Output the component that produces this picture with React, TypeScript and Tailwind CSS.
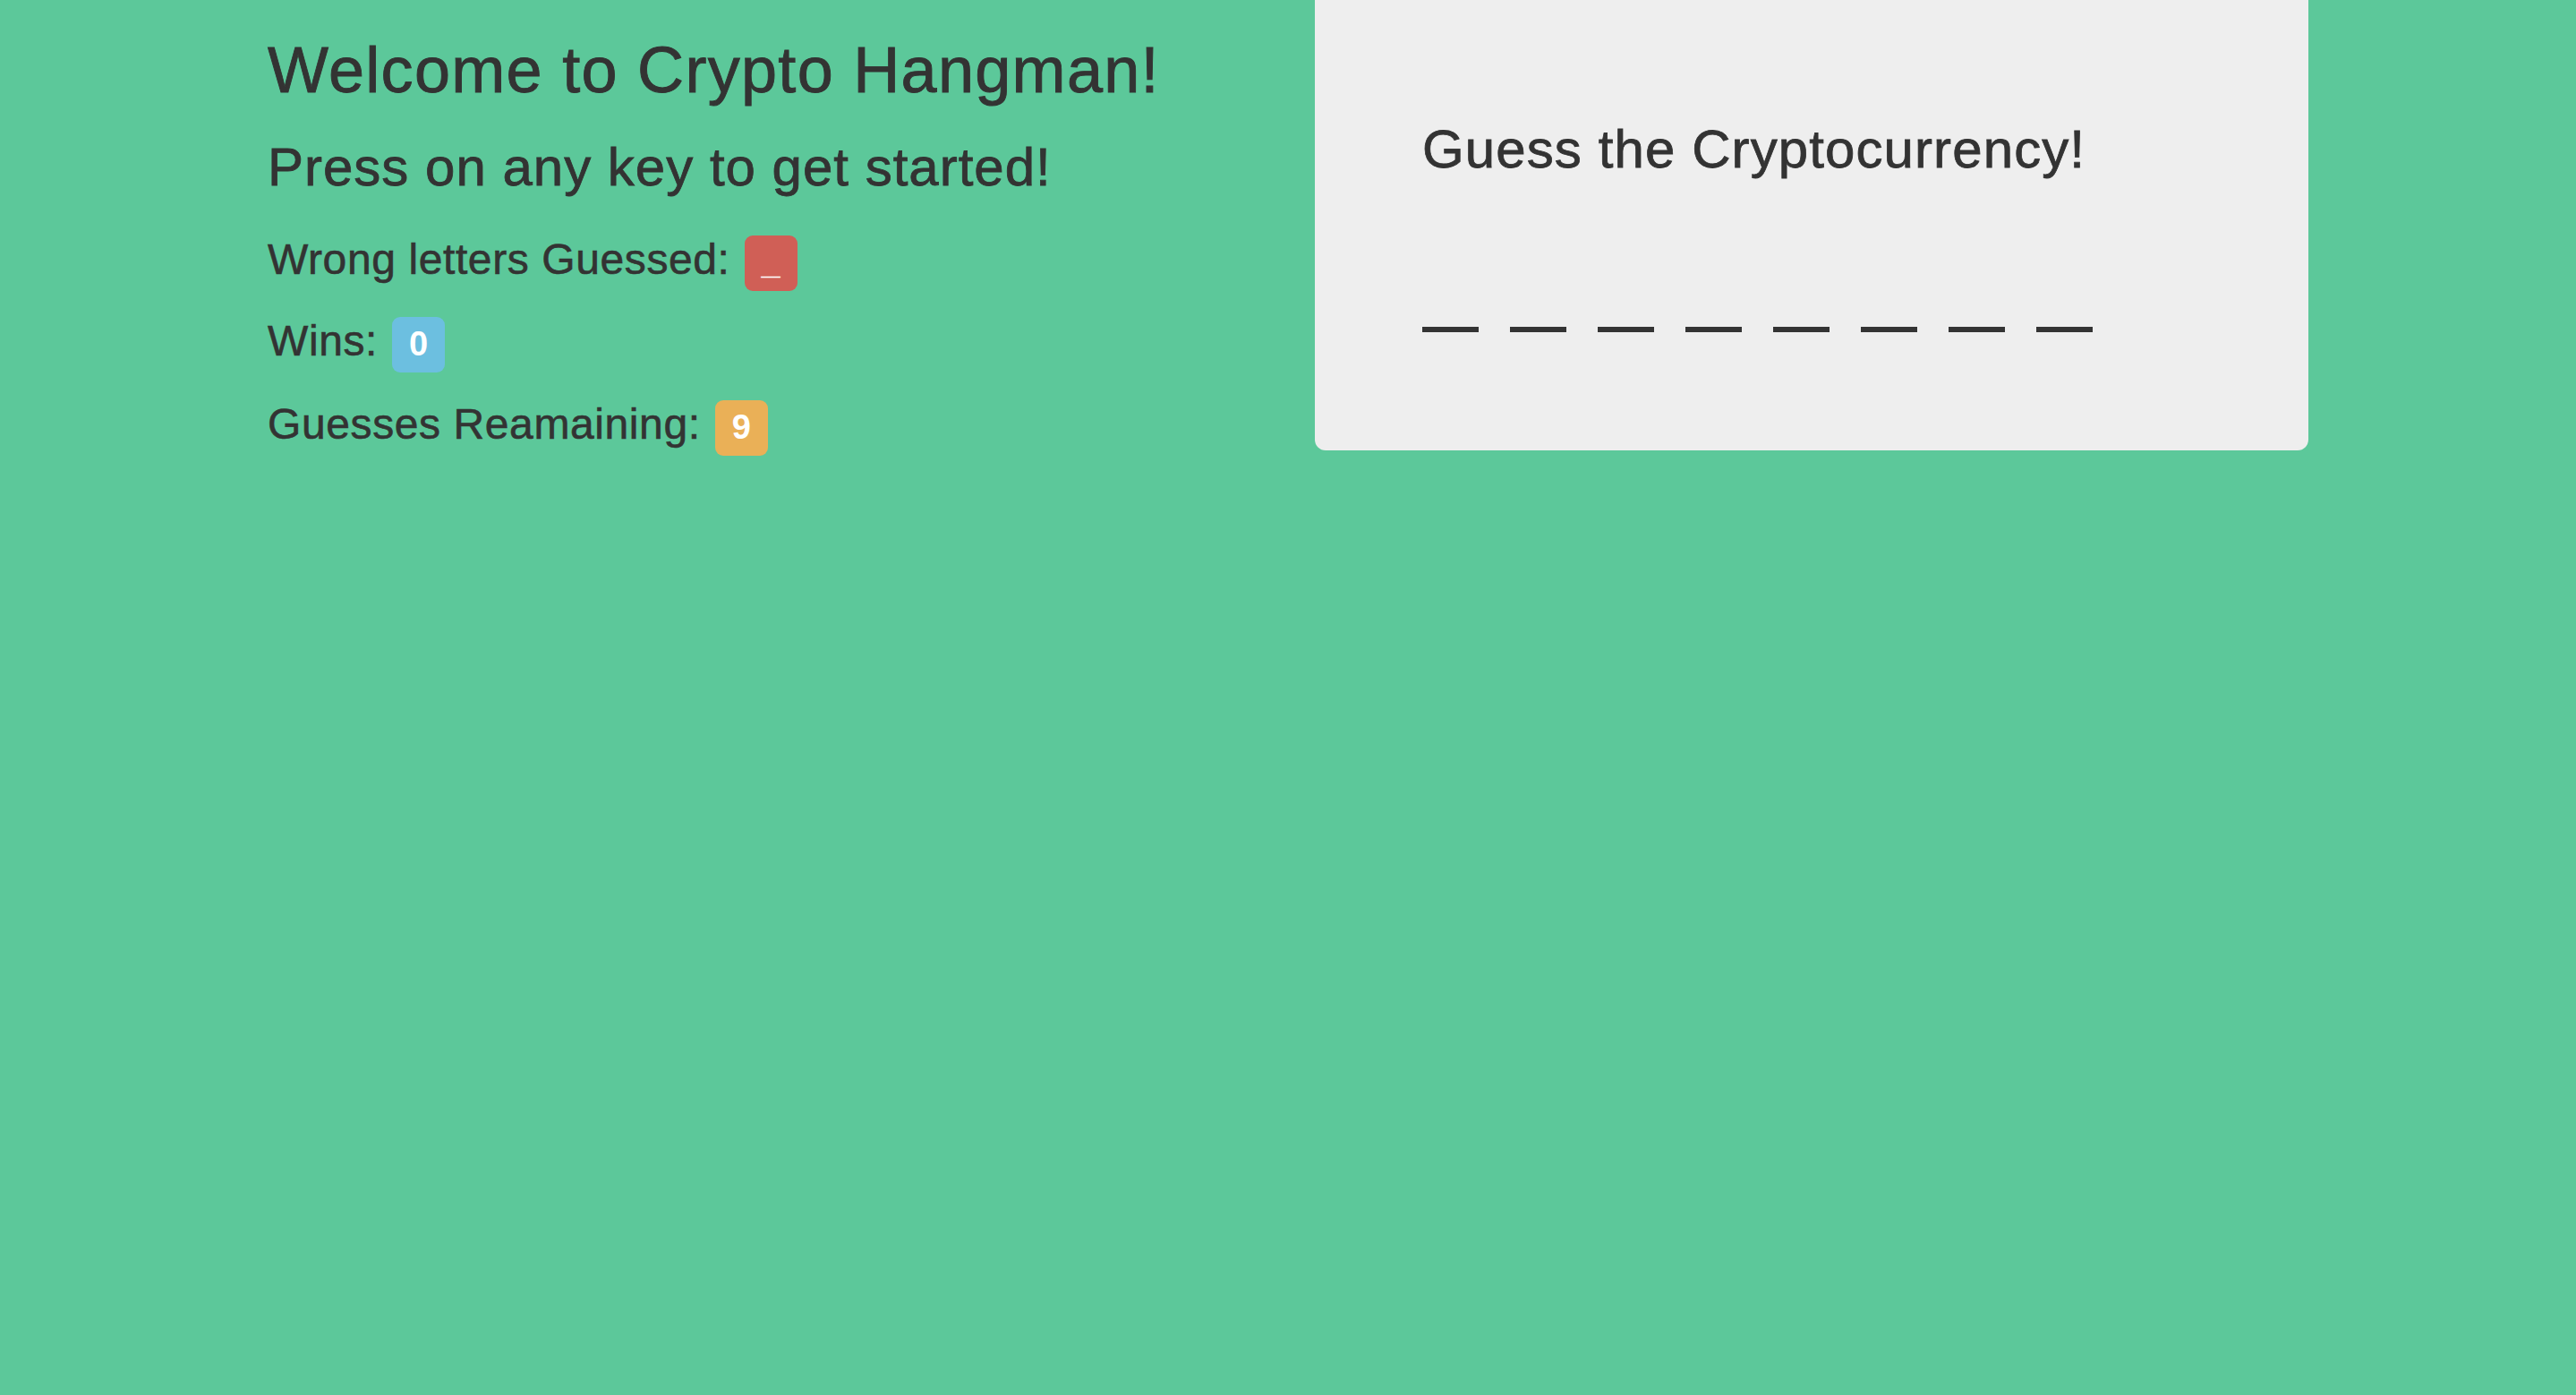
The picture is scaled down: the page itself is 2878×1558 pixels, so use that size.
const font = { fontFamily: '"Liberation Sans", Arial, sans-serif' };

function Stat({ label, value, color, top }: { label: string; value: string; color: string; top: string }) {
  return (
    <div className={`flex items-baseline gap-[16px] ${top}`}>
      <span className="text-[48px] leading-[1.1] tracking-[0.6px] [-webkit-text-stroke:0.6px_#333333]">{label}</span>
      <span
        className={`inline-flex rounded-[9px] px-[19px] pt-[11px] pb-[13px] text-[38px] font-bold leading-none text-white ${color}`}
      >
        {value}
      </span>
    </div>
  );
}

export default function App() {
  const letters = Array.from({ length: 8 });
  return (
    <div className="min-h-[1558px] w-full bg-[#5cc89a] text-[#333333]" style={font}>
      <div className="mx-auto grid w-[2340px] grid-cols-2">
        <div className="px-[30px]">
          <h1 className="mt-[39px] text-[72px] leading-[1.1] tracking-[1.3px] [-webkit-text-stroke:0.9px_#333333]">
            Welcome to Crypto Hangman!
          </h1>
          <h2 className="mt-[36px] text-[60px] leading-[1.1] tracking-[1px] [-webkit-text-stroke:0.8px_#333333]">
            Press on any key to get started!
          </h2>
          <Stat label="Wrong letters Guessed:" value="_" color="bg-[#d05f56]" top="mt-[43px]" />
          <Stat label="Wins:" value="0" color="bg-[#6cbfe0]" top="mt-[29px]" />
          <Stat label="Guesses Reamaining:" value="9" color="bg-[#eab057]" top="mt-[31px]" />
        </div>
        <div className="px-[30px]">
          <div className="rounded-b-[12px] bg-[#eeeeee] pt-[134px] pb-[132px] pl-[120px]">
            <h2 className="text-[60px] leading-[1.1] tracking-[1.1px] [-webkit-text-stroke:0.8px_#333333]">
              Guess the Cryptocurrency!
            </h2>
            <div className="mt-[165px] flex gap-[35px]">
              {letters.map((_, i) => (
                <span key={i} className="h-[6px] w-[63px] bg-[#333333]" />
              ))}
            </div>
          </div>
        </div>
      </div>
    </div>
  );
}
